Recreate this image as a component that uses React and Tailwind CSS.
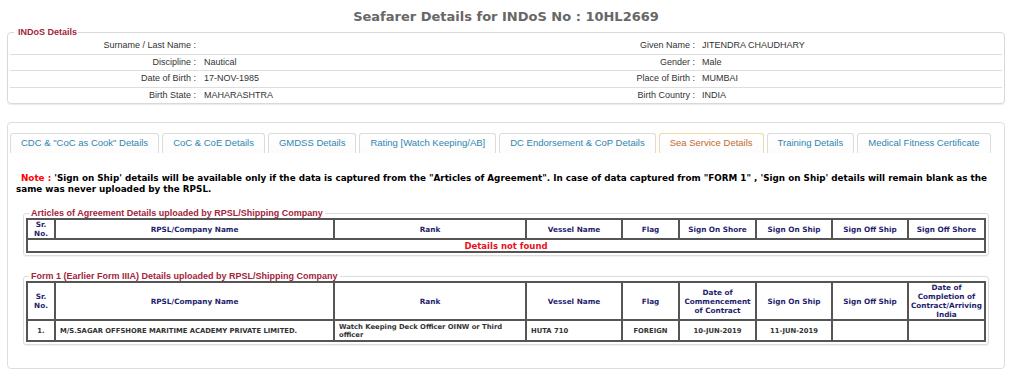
import React from "react";

const indos = [
  ["Surname / Last Name", "", "Given Name", "JITENDRA CHAUDHARY"],
  ["Discipline", "Nautical", "Gender", "Male"],
  ["Date of Birth", "17-NOV-1985", "Place of Birth", "MUMBAI"],
  ["Birth State", "MAHARASHTRA", "Birth Country", "INDIA"],
];

const tabs = [
  'CDC & "CoC as Cook" Details',
  "CoC & CoE Details",
  "GMDSS Details",
  "Rating [Watch Keeping/AB]",
  "DC Endorsement & CoP Details",
  "Sea Service Details",
  "Training Details",
  "Medical Fitness Certificate",
];

const colWidths = [28, 279, 192, 96, 57, 77, 76, 76, 77];

const verdana = { fontFamily: '"DejaVu Sans", Verdana, sans-serif' };

const Cols = () => (
  <colgroup>
    {colWidths.map((w, i) => (
      <col key={i} style={{ width: w }} />
    ))}
  </colgroup>
);

const Th = ({ children }) => (
  <th className="border-2 border-[#555] text-center align-middle font-bold text-[7.3px] leading-[9px] text-[#1f1f6e] px-[1px]">
    {children}
  </th>
);

const Td = ({ children, left }) => (
  <td
    className={`border-2 border-[#555] align-middle font-bold text-[6.8px] leading-[8px] text-[#333] px-[4px] ${
      left ? "text-left" : "text-center"
    }`}
  >
    {children}
  </td>
);

const Box = ({ title, children, className }) => (
  <fieldset
    className={`border border-[#dcdcdc] rounded-[3px] px-[2px] pb-[2px] shadow-[0_1px_1px_rgba(0,0,0,0.06)] ${className}`}
  >
    <legend
      className="ml-[3px] px-[2px] text-[9px] leading-[9px] font-bold text-[#a3243b]"
      style={{ fontFamily: '"Liberation Sans", Arial, sans-serif' }}
    >
      {title}
    </legend>
    {children}
  </fieldset>
);

export default function App() {
  return (
    <div
      className="w-[1026px] h-[376px] bg-white overflow-hidden"
      style={{ fontFamily: '"Liberation Sans", Arial, sans-serif' }}
    >
      <div className="ml-[7px] w-[998px]">
        {/* title */}
        <div
          className="h-[28px] pt-[9px] text-center text-[13px] leading-[16px] font-bold text-[#676767]"
          style={verdana}
        >
          Seafarer Details for INDoS No : 10HL2669
        </div>

        {/* INDoS details */}
        <fieldset className="border border-[#d9d9d9] rounded-[4px] px-[2px] shadow-[0_1px_1px_rgba(0,0,0,0.08)]">
          <legend className="ml-[4px] pl-[4px] pr-[1px] text-[9px] leading-[9px] font-bold text-[#a3243b]">
            INDoS Details
          </legend>
          {indos.map((r, i) => (
            <div
              key={i}
              className={`grid grid-cols-[189px_308px_191px_1fr] h-[16.5px] items-center text-[9px] text-[#333] ${
                i > 0 ? "border-t border-[#dedede]" : ""
              }`}
            >
              <div className="text-right pr-[3px]">{r[0]} :</div>
              <div className="pl-[5px]">{r[1]}</div>
              <div className="text-right pr-[3px]">{r[2]} :</div>
              <div className="pl-[4px]">{r[3]}</div>
            </div>
          ))}
        </fieldset>

        {/* tab panel */}
        <div className="mt-[18px] h-[247px] border border-[#dedede] rounded-[4px] pt-[10px] px-[2px]">
          <div className="flex gap-[3px]">
            {tabs.map((t) => {
              const active = t === "Sea Service Details";
              return (
                <div
                  key={t}
                  className={`shrink-0 whitespace-nowrap h-[20px] px-[10px] flex items-center rounded-t-[3px] border-t border-l border-r text-[9.5px] bg-gradient-to-b from-white to-[#fcfcfc] ${
                    active
                      ? "border-[#f2d9a6] text-[#c4692d]"
                      : "border-[#dcdcdc] text-[#2f86b0]"
                  }`}
                >
                  {t}
                </div>
              );
            })}
          </div>

          <div
            className="mt-[20px] ml-[6px] text-[8.8px] leading-[11px] font-bold text-black whitespace-nowrap"
            style={verdana}
          >
            <span className="inline-block w-[5px]" />
            <span className="text-[#f00]">Note :</span> 'Sign on Ship' details will be
            available only if the data is captured from the "Articles of Agreement". In
            case of data captured from "FORM 1" , 'Sign on Ship' details will remain blank
            as the
            <br />
            same was never uploaded by the RPSL.
          </div>

          <Box
            title="Articles of Agreement Details uploaded by RPSL/Shipping Company"
            className="mt-[14px] ml-[13px] w-[964px]"
          >
            <table className="w-[958px] table-fixed border-collapse border-2 border-[#555]" style={verdana}>
              <Cols />
              <thead>
                <tr className="h-[19px]">
                  <Th>
                    Sr.
                    <br />
                    No.
                  </Th>
                  <Th>RPSL/Company Name</Th>
                  <Th>Rank</Th>
                  <Th>Vessel Name</Th>
                  <Th>Flag</Th>
                  <Th>Sign On Shore</Th>
                  <Th>Sign On Ship</Th>
                  <Th>Sign Off Ship</Th>
                  <Th>Sign Off Shore</Th>
                </tr>
              </thead>
              <tbody>
                <tr className="h-[13px]">
                  <td
                    colSpan={9}
                    className="border-2 border-[#555] text-center font-bold text-[8.5px] leading-[10px] text-[#e8101c]"
                  >
                    Details not found
                  </td>
                </tr>
              </tbody>
            </table>
          </Box>

          <Box
            title="Form 1 (Earlier Form IIIA) Details uploaded by RPSL/Shipping Company"
            className="mt-[16px] ml-[13px] w-[964px]"
          >
            <table className="w-[958px] table-fixed border-collapse border-2 border-[#555]" style={verdana}>
              <Cols />
              <thead>
                <tr className="h-[37px]">
                  <Th>
                    Sr.
                    <br />
                    No.
                  </Th>
                  <Th>RPSL/Company Name</Th>
                  <Th>Rank</Th>
                  <Th>Vessel Name</Th>
                  <Th>Flag</Th>
                  <Th>
                    Date of
                    <br />
                    Commencement
                    <br />
                    of Contract
                  </Th>
                  <Th>Sign On Ship</Th>
                  <Th>Sign Off Ship</Th>
                  <Th>
                    Date of
                    <br />
                    Completion of
                    <br />
                    Contract/Arriving
                    <br />
                    India
                  </Th>
                </tr>
              </thead>
              <tbody>
                <tr className="h-[21px]">
                  <Td>1.</Td>
                  <Td left>M/S.SAGAR OFFSHORE MARITIME ACADEMY PRIVATE LIMITED.</Td>
                  <Td left>
                    Watch Keeping Deck Officer OINW or Third
                    <br />
                    officer
                  </Td>
                  <Td left>HUTA 710</Td>
                  <Td>FOREIGN</Td>
                  <Td>10-JUN-2019</Td>
                  <Td>11-JUN-2019</Td>
                  <Td></Td>
                  <Td></Td>
                </tr>
              </tbody>
            </table>
          </Box>
        </div>
      </div>
    </div>
  );
}
